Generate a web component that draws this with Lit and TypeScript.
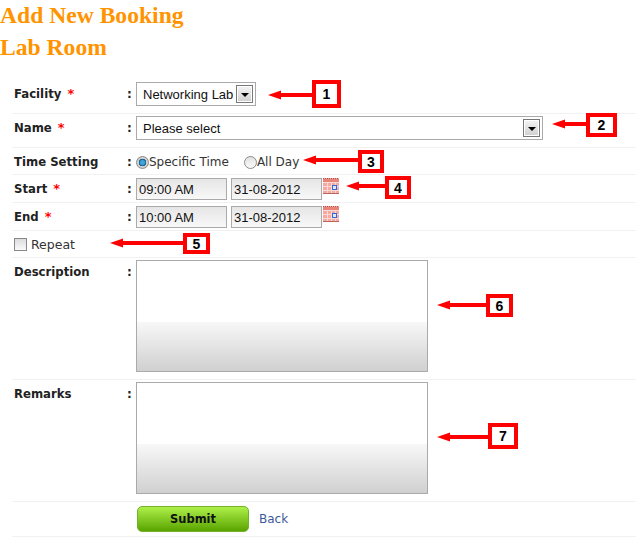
import { LitElement, css, html, svg } from 'lit'
import { customElement } from 'lit/decorators.js'

// callouts drawn over the form: box + arrow pointing left
const callouts = [
  { n: 1, x: 312, y: 80, w: 29, h: 28, tip: 268, ay: 95 },
  { n: 2, x: 586, y: 113, w: 31, h: 24, tip: 552, ay: 124 },
  { n: 3, x: 358, y: 150, w: 26, h: 23, tip: 303, ay: 160 },
  { n: 4, x: 385, y: 176, w: 26, h: 23, tip: 346, ay: 186 },
  { n: 5, x: 183, y: 233, w: 27, h: 21, tip: 110, ay: 243 },
  { n: 6, x: 486, y: 294, w: 27, h: 23, tip: 437, ay: 305 },
  { n: 7, x: 488, y: 423, w: 30, h: 26, tip: 437, ay: 437 },
]

const calendar = html`
  <svg class="cal" width="16" height="16" viewBox="0 0 16 16">
    <rect x="0" y="0" width="16" height="16" fill="#f4a9a1" />
    <rect x="0" y="1" width="16" height="3" fill="#e8837a" />
    <path d="M0 0.500h16" stroke="#a8544d" stroke-dasharray="1 1" />
    <path d="M0 4.500h16M0 8.500h16M0 12.500h16M4.500 4v11M8.500 4v11M12.500 4v11" stroke="#fbd9d5" />
    <rect x="0" y="15" width="16" height="1" fill="#b9645d" />
    <rect x="9.500" y="7.500" width="4" height="4" fill="#dfe8fb" stroke="#3468d8" />
  </svg>
`

@customElement('app-root')
export class AppRoot extends LitElement {
  static styles = css`
    :host {
      display: block;
      position: relative;
      width: 636px;
      height: 545px;
      overflow: hidden;
      background: #fff;
      font-family: 'DejaVu Sans', sans-serif;
      font-size: 12px;
      color: #222;
    }

    h1 {
      margin: 0;
      height: 32px;
      font: bold 23.600px/30px 'Liberation Serif', serif;
      color: #ff9400;
    }

    .titles {
      height: 72px;
    }

    form {
      margin-left: 12px;
    }

    .row {
      display: grid;
      grid-template-columns: 113px 9px 1fr;
      padding-left: 2px;
      box-sizing: border-box;
      border-bottom: 1px solid #f1f1f1;
    }

    .label {
      font-weight: bold;
      font-size: 11.700px;
    }

    .req {
      color: #f00;
      margin-left: 2px;
      font-size: 13px;
    }

    .colon {
      font-weight: bold;
      font-size: 12px;
    }

    .controls {
      display: flex;
      align-items: flex-start;
    }

    .r-facility { margin-top: 9px; height: 33px; padding-top: 1px; line-height: 24px; }
    .r-name { height: 34px; padding-top: 2px; line-height: 24px; }
    .r-time { height: 27px; padding-top: 2px; line-height: 24px; }
    .r-start { height: 28px; padding-top: 3px; line-height: 22px; }
    .r-repeat { height: 27px; }
    .r-area { height: 122px; padding-top: 2px; line-height: 24px; }
    .r-submit { height: 35px; }

    .select {
      display: flex;
      align-items: center;
      justify-content: space-between;
      box-sizing: border-box;
      height: 24px;
      padding: 0 2px 0 6px;
      border: 1px solid #aaa;
      background: #fff;
      font: 13px 'Liberation Sans', sans-serif;
      color: #111;
      white-space: nowrap;
    }

    .facility { width: 120px; }
    .name { width: 407px; }

    .drop {
      position: relative;
      box-sizing: border-box;
      width: 17px;
      height: 18px;
      border: 1px solid #777;
      background: linear-gradient(#f4f4f4, #cfcfcf);
      box-shadow: inset 0 0 0 1px #fff;
    }

    .drop::after {
      content: '';
      position: absolute;
      left: 4px;
      top: 7px;
      border: 4px solid transparent;
      border-top: 4px solid #000;
      border-bottom: 0;
    }

    input.text {
      box-sizing: border-box;
      width: 91px;
      height: 22px;
      margin: 0 4px 0 0;
      padding: 0 0 0 2px;
      border: 1px solid #aaa;
      background: linear-gradient(#e6e6e6, #f8f8f8);
      font: 13px 'Liberation Sans', sans-serif;
      color: #111;
    }

    .cal {
      margin-left: -3px;
    }

    .choice {
      display: inline-flex;
      align-items: center;
      margin-right: 15px;
      height: 24px;
      font-size: 12px;
      color: #333;
    }

    .radio {
      box-sizing: border-box;
      width: 13px;
      height: 13px;
      border-radius: 50%;
      border: 1px solid #8a8a8a;
      background: linear-gradient(#e2e2e2, #fbfbfb);
    }

    .radio.on {
      background: radial-gradient(circle, #3fa3dc 0 2px, #0b5484 3.500px, #cfcfcf 4px);
    }

    .repeat {
      display: flex;
      align-items: center;
      height: 26px;
      font-size: 12.500px;
      color: #333;
    }

    .check {
      box-sizing: border-box;
      width: 13px;
      height: 13px;
      margin-right: 4px;
      border: 1px solid #888;
      background: linear-gradient(#dcdcdc, #fafafa);
    }

    textarea {
      display: block;
      box-sizing: border-box;
      width: 292px;
      height: 112px;
      margin: 0;
      border: 1px solid #aaa;
      resize: none;
      background: linear-gradient(#fff 55%, #f8f8f8 55%, #d0d0d0 100%);
    }

    .actions {
      grid-column: 1 / 4;
      display: flex;
      align-items: center;
      padding-left: 123px;
    }

    button {
      box-sizing: border-box;
      width: 112px;
      height: 26px;
      padding: 0;
      border: 1px solid #74b02a;
      border-radius: 5px;
      background: linear-gradient(#aef04a, #5aa400);
      font: bold 11.500px 'DejaVu Sans', sans-serif;
      color: #111;
    }

    .back {
      margin-left: 10px;
      font-size: 12px;
      color: #3c5a9a;
      text-decoration: none;
    }

    .box {
      position: absolute;
      box-sizing: border-box;
      display: flex;
      align-items: center;
      justify-content: center;
      border: 4px solid #f00;
      background: #fff;
      font: bold 14px 'Liberation Sans', sans-serif;
      color: #000;
    }

    .arrows {
      position: absolute;
      inset: 0;
      pointer-events: none;
    }
  `

  render() {
    return html`
      <div class="titles">
        <h1>Add New Booking</h1>
        <h1>Lab Room</h1>
      </div>
      <form @submit=${(e: Event) => e.preventDefault()}>
        <div class="row r-facility">
          <span class="label">Facility <span class="req">*</span></span>
          <span class="colon">:</span>
          <div class="controls">
            <div class="select facility">Networking Lab<span class="drop"></span></div>
          </div>
        </div>
        <div class="row r-name">
          <span class="label">Name <span class="req">*</span></span>
          <span class="colon">:</span>
          <div class="controls">
            <div class="select name">Please select<span class="drop"></span></div>
          </div>
        </div>
        <div class="row r-time">
          <span class="label">Time Setting</span>
          <span class="colon">:</span>
          <div class="controls">
            <span class="choice"><span class="radio on"></span>Specific Time</span>
            <span class="choice"><span class="radio"></span>All Day</span>
          </div>
        </div>
        <div class="row r-start">
          <span class="label">Start <span class="req">*</span></span>
          <span class="colon">:</span>
          <div class="controls">
            <input class="text" value="09:00 AM" />
            <input class="text" value="31-08-2012" />
            ${calendar}
          </div>
        </div>
        <div class="row r-start">
          <span class="label">End <span class="req">*</span></span>
          <span class="colon">:</span>
          <div class="controls">
            <input class="text" value="10:00 AM" />
            <input class="text" value="31-08-2012" />
            ${calendar}
          </div>
        </div>
        <div class="row r-repeat">
          <label class="repeat"><span class="check"></span>Repeat</label>
        </div>
        <div class="row r-area">
          <span class="label">Description</span>
          <span class="colon">:</span>
          <textarea></textarea>
        </div>
        <div class="row r-area">
          <span class="label">Remarks</span>
          <span class="colon">:</span>
          <textarea></textarea>
        </div>
        <div class="row r-submit">
          <div class="actions">
            <button type="submit">Submit</button>
            <a class="back" href="#">Back</a>
          </div>
        </div>
      </form>
      <svg class="arrows" width="636" height="545">
        ${callouts.map(
          (c) => svg`
            <path d="M${c.tip + 12} ${c.ay - 2}H${c.x}v4H${c.tip + 12}z" fill="#f00" />
            <path d="M${c.tip} ${c.ay}l13 -4.500v9z" fill="#f00" />
          `,
        )}
      </svg>
      ${callouts.map(
        (c) => html`
          <div class="box" style="left:${c.x}px;top:${c.y}px;width:${c.w}px;height:${c.h}px">${c.n}</div>
        `,
      )}
    `
  }
}
